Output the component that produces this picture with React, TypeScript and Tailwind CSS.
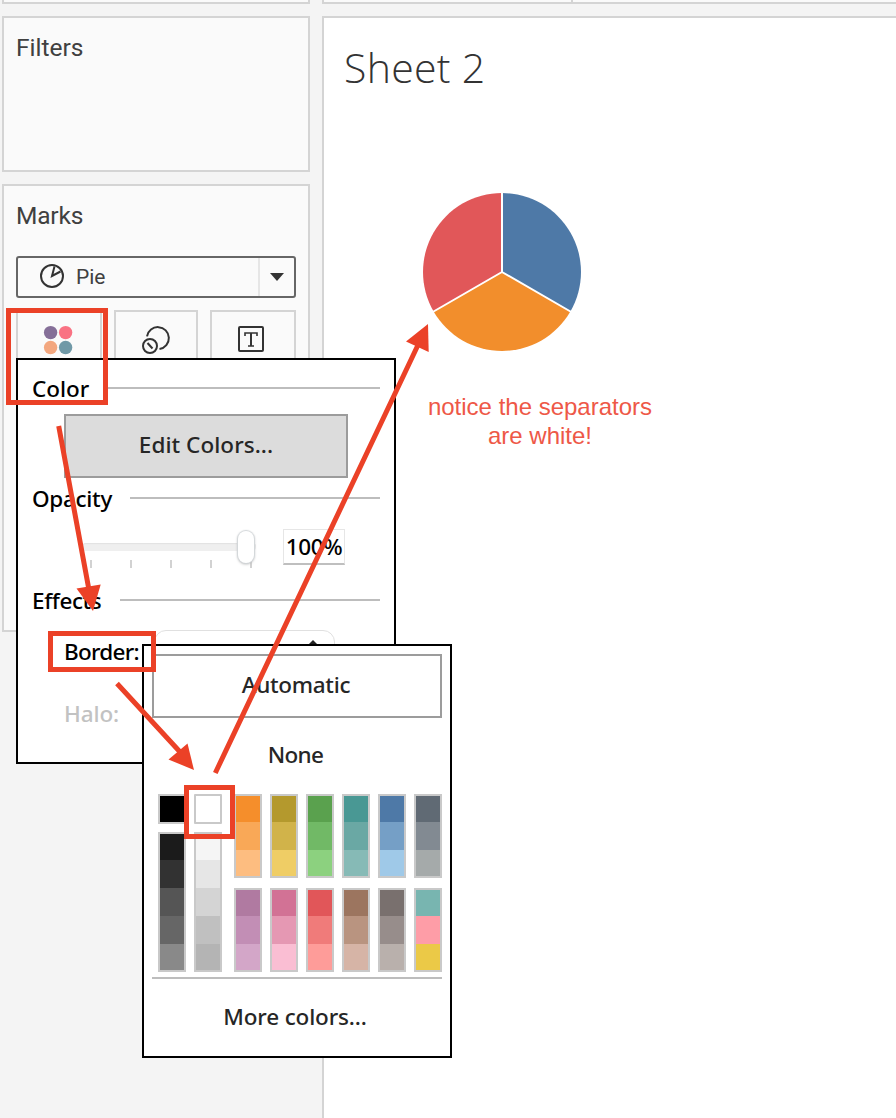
import React from "react";

const RAMPS_TOP = [
  ["#f58e2b", "#f9a857", "#fdbd80"],
  ["#b4992d", "#d1b34a", "#efcd65"],
  ["#5aa14e", "#71b966", "#8cd17f"],
  ["#499894", "#6aa8a4", "#86bab6"],
  ["#4e79a7", "#759fc6", "#9fc9e8"],
  ["#606a74", "#828a92", "#a5aaaa"],
];
const RAMPS_BOTTOM = [
  ["#b07aa1", "#c28eb5", "#d3a6c8"],
  ["#d27295", "#e598b3", "#fabed3"],
  ["#e15659", "#f07b7a", "#fe9c99"],
  ["#9c755f", "#b99480", "#d6b4a6"],
  ["#79706e", "#978d8b", "#b9b0ac"],
  ["#78b5b0", "#fe9da7", "#ebc947"],
];
const DARKS = ["#1b1b1b", "#323232", "#555555", "#666666", "#898989"];
const LIGHTS = ["#f5f5f5", "#e6e6e6", "#d4d4d4", "#c0c0c0", "#b4b4b4"];

function Ramp({ colors }: { colors: string[] }) {
  return (
    <div className="flex w-7 flex-col border-2 border-[#c9c9c9]">
      {colors.map((c, i) => (
        <div
          key={c}
          className={i === 0 || i === colors.length - 1 ? "h-[26px]" : "h-7"}
          style={{ backgroundColor: c }}
        />
      ))}
    </div>
  );
}

function Section({ title, className = "" }: { title: React.ReactNode; className?: string }) {
  return (
    <div className={`flex h-8 items-center pl-[14px] pr-[14px] ${className}`}>
      {title}
      <div className="mt-[-1px] h-[2px] flex-1 bg-[#bdbdbd]" />
    </div>
  );
}

function Sidebar() {
  return (
    <aside className="flex w-[322px] shrink-0 flex-col pl-[2px] pr-3 font-['Roboto'] text-[24.5px] text-[#404040]">
      <div className="h-1 border-2 border-t-0 border-[#d4d4d4] bg-[#fafafa]" />
      <section className="mt-3 h-[156px] border-2 border-[#d4d4d4] bg-[#fafafa] pl-[12px] pt-[12px]">
        <h2 className="leading-9">Filters</h2>
      </section>
      <section className="mt-3 h-[448px] border-2 border-[#d4d4d4] bg-[#fafafa] px-3 pt-[12px]">
        <h2 className="leading-9 tracking-[-0.2px]">Marks</h2>
        <div className="mt-[22px] flex h-[42px] items-center rounded-[3px] border-2 border-[#666]">
          <svg className="-mt-[2px] ml-[20px] size-7" viewBox="0 0 28 28" fill="none" stroke="#333" strokeWidth="2">
            <circle cx="14" cy="14" r="11" />
            <path d="M16.5 4.5L14 14L22.5 9.5" />
          </svg>
          <span className="ml-[10px] text-[21px] leading-none">Pie</span>
          <div className="ml-auto flex h-full w-[36px] items-center justify-center border-l-2 border-[#e6e6e6]">
            <svg className="h-2 w-[14px]" viewBox="0 0 14 8">
              <path d="M0 0H14L7 8Z" fill="#333" />
            </svg>
          </div>
        </div>
        <div className="mt-3 flex h-[60px] gap-3">
          <div className="w-[86px] border-2 border-[#d4d4d4]">
            <svg className="ml-[25px] mt-[13px] size-8" viewBox="0 0 32 32">
              <circle cx="7.6" cy="7.6" r="6.7" fill="#856f98" />
              <circle cx="22.6" cy="7.6" r="6.7" fill="#f97283" />
              <circle cx="7.6" cy="22.5" r="6.7" fill="#f3a77f" />
              <circle cx="22.6" cy="22.5" r="6.7" fill="#7099a7" />
            </svg>
          </div>
          <div className="w-[84px] border-2 border-[#d4d4d4]">
            <svg className="ml-[24px] mt-[12px] size-8" viewBox="0 0 32 32" fill="none" stroke="#333" strokeWidth="2">
              <path d="M7 12.3A11 11 0 1 1 19.5 25" />
              <circle cx="10" cy="22" r="7" />
              <path d="M7.5 19L12.5 24.5" />
            </svg>
          </div>
          <div className="w-[86px] border-2 border-[#d4d4d4]">
            <div className="ml-[26px] mt-[14px] flex size-[26px] items-center justify-center rounded-[2px] border-2 border-[#333]">
              <svg className="size-[22px]" viewBox="0 0 22 22" fill="none" stroke="#333">
                <path d="M5 8V5H17V8M8 18H14" strokeWidth="1.6" />
                <path d="M11 5V18" strokeWidth="2" />
              </svg>
            </div>
          </div>
        </div>
      </section>
    </aside>
  );
}

function Worksheet() {
  return (
    <main className="flex flex-1 flex-col">
      <div className="flex h-1 border-b-2 border-l-2 border-[#d4d4d4] bg-[#fafafa]">
        <div className="w-[249px] border-r-2 border-[#d4d4d4]" />
      </div>
      <div className="mt-3 flex-1 border-l-2 border-t-2 border-[#d4d4d4] bg-white">
        <h1 className="ml-[20px] mt-[21px] font-['Open_Sans'] text-[41px] font-light leading-[56px] tracking-[0.3px] text-[#333]">
          Sheet 2
        </h1>
        <svg className="ml-[98px] mt-[97px] size-[160px]" viewBox="0 0 160 160">
          <path d="M80 80V1A79 79 0 0 1 148.4 119.5Z" fill="#4e79a7" />
          <path d="M80 80L148.4 119.5A79 79 0 0 1 11.6 119.5Z" fill="#f28e2c" />
          <path d="M80 80L11.6 119.5A79 79 0 0 1 80 1Z" fill="#e15759" />
          <path d="M80 0V80L149.3 120M80 80L10.7 120" fill="none" stroke="#fff" strokeWidth="2" />
        </svg>
        <p className="ml-[76px] mt-[40px] w-[280px] text-center font-['Liberation_Sans'] text-[24px] leading-[29px] text-[#ee5847]">
          notice the separators
          <br />
          are white!
        </p>
      </div>
    </main>
  );
}

function ColorPopup() {
  return (
    <div className="absolute left-4 top-[358px] h-[406px] w-[380px] border-2 border-black bg-white font-['Noto_Sans'] text-[22.5px] font-medium leading-8 text-black">
      <Section className="mt-3" title={<span className="mt-[2px] w-[76px]">Color</span>} />
      <button className="ml-[46px] mt-[10px] block h-16 w-[284px] border-2 border-[#9c9c9c] bg-[#dcdcdc] pb-[2px] tracking-[0.05px] text-[#262626]">
        Edit Colors...
      </button>
      <Section className="mt-1" title={<span className="mt-[2px] w-[98px] tracking-[-0.3px]">Opacity</span>} />
      <div className="mt-[15px] flex h-[38px] pl-[64px]">
        <div className="relative h-full w-[174px]">
          <div className="mt-[14px] h-2 w-full rounded bg-[#efefef] shadow-[inset_0_1px_1px_#e2e2e2]" />
          <div className="ml-2 mt-[9px] flex w-[162px] justify-between">
            {[0, 1, 2, 3, 4].map((n) => (
              <div key={n} className="h-2 w-[2px] bg-[#d2d2d2]" />
            ))}
          </div>
          <div className="absolute left-[156px] top-[2px] h-8 w-[16px] rounded-full bg-white shadow-[0_0_1px_1px_#d3d7da,0_1px_3px_#aaa]" />
        </div>
        <div className="ml-[27px] h-[36px] w-[62px] border border-b-2 border-[#e6e6e6] border-b-[#bfbfbf] text-center leading-[34px] tracking-[-0.3px]">
          100%
        </div>
      </div>
      <Section className="mt-[17px]" title={<span className="mt-[2px] w-[88px] tracking-[-0.4px]">Effects</span>} />
      <div className="mt-[14px] flex h-10 pl-[46px]">
        <span className="mt-[6px] w-[90px] tracking-[-0.75px]">Border:</span>
        <div className="h-10 w-[181px] rounded-[12px] border border-[#e0e0e0] pl-[152px] pt-[9px]">
          <svg className="h-4 w-3" viewBox="0 0 12 16">
            <path d="M6 0L12 6H0Z" fill="#222" />
          </svg>
        </div>
      </div>
      <div className="ml-[46px] mt-[28px] tracking-[-0.1px] text-[#c2c2c2]">Halo:</div>
    </div>
  );
}

function PalettePopup() {
  return (
    <div className="absolute left-[142px] top-[644px] h-[414px] w-[310px] border-2 border-black bg-white p-2 font-['Noto_Sans'] text-[22.5px] font-medium leading-8 text-[#262626]">
      <div className="h-16 border-2 border-[#9c9c9c] pr-[2px] pt-[13px] text-center tracking-[-0.3px]">Automatic</div>
      <div className="mt-[21px] pr-[3px] text-center tracking-[-0.7px]">None</div>
      <div className="ml-[6px] mt-[23px] flex h-[178px]">
        <div className="flex gap-2">
          <div className="flex flex-col gap-2">
            <div className="h-[30px] w-7 border-2 border-[#c9c9c9] bg-black" />
            <Ramp colors={DARKS} />
          </div>
          <div className="flex flex-col gap-2">
            <div className="h-[30px] w-7 rounded-[1px] border-2 border-[#c9c9c9] bg-white" />
            <Ramp colors={LIGHTS} />
          </div>
        </div>
        <div className="ml-3 flex flex-col gap-[10px]">
          <div className="flex gap-2">
            {RAMPS_TOP.map((r) => (
              <Ramp key={r[0]} colors={r} />
            ))}
          </div>
          <div className="flex gap-2">
            {RAMPS_BOTTOM.map((r) => (
              <Ramp key={r[0]} colors={r} />
            ))}
          </div>
        </div>
      </div>
      <div className="mt-[5px] h-[2px] bg-[#bdbdbd]" />
      <div className="mt-[22px] pr-[4px] text-center tracking-[-0.15px]">More colors...</div>
    </div>
  );
}

function Annotations() {
  return (
    <svg className="pointer-events-none absolute left-0 top-0" width="896" height="1118" viewBox="0 0 896 1118">
      <g fill="none" stroke="#eb4127" strokeWidth="5">
        <rect x="8.5" y="310.5" width="97" height="92" />
        <rect x="50.5" y="633.5" width="103" height="36" />
        <rect x="186.5" y="787.5" width="46" height="49" />
        <path d="M58.7 426L89 590M117 683.5L181 753M215.3 773L418 345" />
      </g>
      <g fill="#eb4127">
        <path d="M93 611L76.5 588.5L100.7 584.5Z" />
        <path d="M194 770L168.5 759.5L187.5 743.5Z" />
        <path d="M428 324L406 341.5L428.7 352Z" />
      </g>
    </svg>
  );
}

export default function App() {
  return (
    <div className="relative flex h-[1118px] w-[896px] overflow-hidden bg-[#f4f4f4]">
      <Sidebar />
      <Worksheet />
      <ColorPopup />
      <PalettePopup />
      <Annotations />
    </div>
  );
}
